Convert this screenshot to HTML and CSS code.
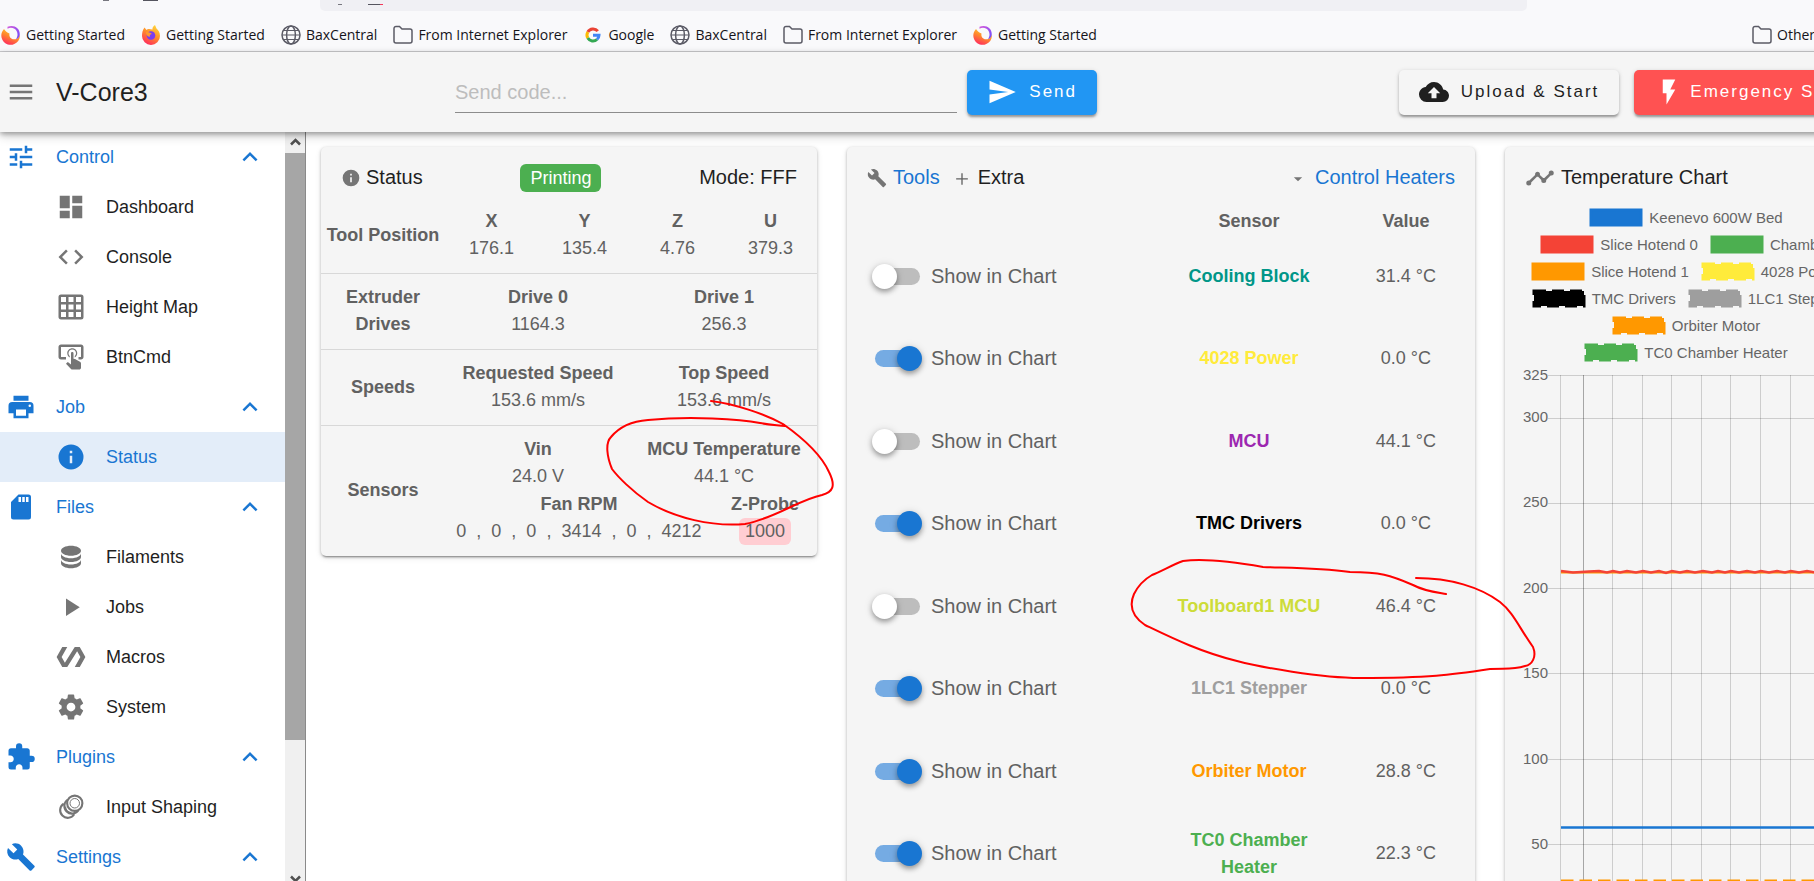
FILE: index.html
```html
<!DOCTYPE html>
<html lang="en">
<head>
<meta charset="utf-8">
<title>V-Core3</title>
<link rel="stylesheet" href="styles.css">
</head>
<body>
<svg class="sprite" aria-hidden="true">
  <defs>
    <linearGradient id="flame" x1="0.8" y1="0" x2="0.3" y2="1"><stop offset="0" stop-color="#ffde3a"/><stop offset="0.5" stop-color="#ff8a2c"/><stop offset="1" stop-color="#ff2a5f"/></linearGradient>
    <linearGradient id="swirl" x1="0" y1="0" x2="1" y2="1"><stop offset="0" stop-color="#d65ad8"/><stop offset="1" stop-color="#6a4bff"/></linearGradient>
  </defs>
  <symbol id="menu" viewBox="0 0 24 24"><path d="M3,6H21V8H3V6M3,11H21V13H3V11M3,16H21V18H3V16Z"/></symbol>
  <symbol id="tune" viewBox="0 0 24 24"><path d="M3,17V19H9V17H3M3,5V7H13V5H3M13,21V19H21V17H13V15H11V21H13M7,9V11H3V13H7V15H9V9H7M21,13V11H11V13H21M15,9H17V7H21V5H17V3H15V9Z"/></symbol>
  <symbol id="dashboard" viewBox="0 0 24 24"><path d="M13,3V9H21V3M13,21H21V11H13M3,21H11V15H3M3,13H11V3H3V13Z"/></symbol>
  <symbol id="code" viewBox="0 0 24 24"><path d="M14.6,16.6L19.2,12L14.6,7.4L16,6L22,12L16,18L14.6,16.6M9.4,16.6L4.8,12L9.4,7.4L8,6L2,12L8,18L9.4,16.6Z"/></symbol>
  <symbol id="grid" viewBox="0 0 24 24"><path d="M10,4V8H14V4H10M16,4V8H20V4H16M16,10V14H20V10H16M16,16V20H20V16H16M14,20V16H10V20H14M8,20V16H4V20H8M8,14V10H4V14H8M8,8V4H4V8H8M10,14H14V10H10V14M4,2H20A2,2 0 0,1 22,4V20A2,2 0 0,1 20,22H4C2.92,22 2,21.1 2,20V4A2,2 0 0,1 4,2Z"/></symbol>
  <symbol id="tap" viewBox="0 0 24 24"><path d="M13 5C15.21 5 17 6.79 17 9C17 10.5 16.2 11.77 15 12.46V11.24C15.61 10.69 16 9.89 16 9C16 7.34 14.66 6 13 6S10 7.34 10 9C10 9.89 10.39 10.69 11 11.24V12.46C9.8 11.77 9 10.5 9 9C9 6.79 10.79 5 13 5M20 20.5C19.97 21.32 19.32 21.97 18.5 22H13C12.62 22 12.26 21.85 12 21.57L8 17.37L8.74 16.6C8.93 16.39 9.2 16.28 9.5 16.28H9.7L12 18V9C12 8.45 12.45 8 13 8S14 8.45 14 9V13.47L15.21 13.6L19.15 15.79C19.68 16.03 20 16.56 20 17.14V20.5M20 2H4C2.9 2 2 2.9 2 4V12C2 13.11 2.9 14 4 14H8V12L4 12L4 4H20L20 12H18V14H20V13.97L20.04 14C21.13 14 22 13.09 22 12V4C22 2.9 21.11 2 20 2Z"/></symbol>
  <symbol id="printer" viewBox="0 0 24 24"><path d="M18,3H6V7H18M19,12A1,1 0 0,1 18,11A1,1 0 0,1 19,10A1,1 0 0,1 20,11A1,1 0 0,1 19,12M16,19H8V14H16M19,8H5A3,3 0 0,0 2,11V17H6V21H18V17H22V11A3,3 0 0,0 19,8Z"/></symbol>
  <symbol id="info" viewBox="0 0 24 24"><path d="M13,9H11V7H13M13,17H11V11H13M12,2A10,10 0 0,0 2,12A10,10 0 0,0 12,22A10,10 0 0,0 22,12A10,10 0 0,0 12,2Z"/></symbol>
  <symbol id="sd" viewBox="0 0 24 24"><path d="M18,8H16V4H18M15,8H13V4H15M12,8H10V4H12M18,2H10L4,8V20A2,2 0 0,0 6,22H18A2,2 0 0,0 20,20V4A2,2 0 0,0 18,2Z"/></symbol>
  <symbol id="database" viewBox="0 0 24 24"><path d="M12,3C7.58,3 4,4.79 4,7C4,9.21 7.58,11 12,11C16.42,11 20,9.21 20,7C20,4.79 16.42,3 12,3M4,9V12C4,14.21 7.58,16 12,16C16.42,16 20,14.21 20,12V9C20,11.21 16.42,13 12,13C7.58,13 4,11.21 4,9M4,14V17C4,19.21 7.58,21 12,21C16.42,21 20,19.21 20,17V14C20,16.21 16.42,18 12,18C7.58,18 4,16.21 4,14Z"/></symbol>
  <symbol id="play" viewBox="0 0 24 24"><path d="M8,5.14V19.14L19,12.14L8,5.14Z"/></symbol>
  <symbol id="polymer" viewBox="0 0 24 24"><path d="M19,4H15L7.11,16.63L4.5,12L9,4H5L0.5,12L5,20H9L16.89,7.37L19.5,12L15,20H19L23.5,12L19,4Z"/></symbol>
  <symbol id="cog" viewBox="0 0 24 24"><path d="M12,15.5A3.5,3.5 0 0,1 8.5,12A3.5,3.5 0 0,1 12,8.5A3.5,3.5 0 0,1 15.5,12A3.5,3.5 0 0,1 12,15.5M19.43,12.97C19.47,12.65 19.5,12.33 19.5,12C19.5,11.67 19.47,11.34 19.43,11L21.54,9.37C21.73,9.22 21.78,8.95 21.66,8.73L19.66,5.27C19.54,5.05 19.27,4.96 19.05,5.05L16.56,6.05C16.04,5.66 15.5,5.32 14.87,5.07L14.5,2.42C14.46,2.18 14.25,2 14,2H10C9.75,2 9.54,2.18 9.5,2.42L9.13,5.07C8.5,5.32 7.96,5.66 7.44,6.05L4.95,5.05C4.73,4.96 4.46,5.05 4.34,5.27L2.34,8.73C2.21,8.95 2.27,9.22 2.46,9.37L4.57,11C4.53,11.34 4.5,11.67 4.5,12C4.5,12.33 4.53,12.65 4.57,12.97L2.46,14.63C2.27,14.78 2.21,15.05 2.34,15.27L4.34,18.73C4.46,18.95 4.73,19.03 4.95,18.95L7.44,17.94C7.96,18.34 8.5,18.68 9.13,18.93L9.5,21.58C9.54,21.82 9.75,22 10,22H14C14.25,22 14.46,21.82 14.5,21.58L14.87,18.93C15.5,18.67 16.04,18.34 16.56,17.94L19.05,18.95C19.27,19.03 19.54,18.95 19.66,18.73L21.66,15.27C21.78,15.05 21.73,14.78 21.54,14.63L19.43,12.97Z"/></symbol>
  <symbol id="puzzle" viewBox="0 0 24 24"><path d="M20.5,11H19V7C19,5.89 18.1,5 17,5H13V3.5A2.5,2.5 0 0,0 10.5,1A2.5,2.5 0 0,0 8,3.5V5H4A2,2 0 0,0 2,7V10.8H3.5C5,10.8 6.2,12 6.2,13.5C6.2,15 5,16.2 3.5,16.2H2V20A2,2 0 0,0 4,22H7.8V20.5C7.8,19 9,17.8 10.5,17.8C12,17.8 13.2,19 13.2,20.5V22H17A2,2 0 0,0 19,20V16H20.5A2.5,2.5 0 0,0 23,13.5A2.5,2.5 0 0,0 20.5,11Z"/></symbol>
  <symbol id="rings" viewBox="0 0 24 24"><g fill="none" stroke="currentColor" stroke-width="1.7"><circle cx="15" cy="9" r="6.1"/><path d="M9.300 6.200A6.100 6.100 0 1 0 17.800 14.700"/><path d="M6.200 9.400A6.100 6.100 0 1 0 14.600 17.800"/><circle cx="15" cy="9" r="3.800" stroke-width="0.8"/><path d="M7.500 11.800A5 5 0 0 0 12.200 16.500" stroke-width="1.2"/></g></symbol>
  <symbol id="wrench" viewBox="0 0 24 24"><path d="M22.7,19L13.6,9.9C14.5,7.6 14,4.9 12.1,3C10.1,1 7.1,0.6 4.7,1.7L9,6L6,9L1.6,4.7C0.4,7.1 0.9,10.1 2.9,12.1C4.8,14 7.5,14.5 9.8,13.6L18.9,22.7C19.3,23.1 19.9,23.1 20.3,22.7L22.6,20.4C23.1,20 23.1,19.3 22.7,19Z"/></symbol>
  <symbol id="up" viewBox="0 0 24 24"><path d="M7.41,15.41L12,10.83L16.59,15.41L18,14L12,8L6,14L7.41,15.41Z"/></symbol>
  <symbol id="send" viewBox="0 0 24 24"><path d="M2,21L23,12L2,3V10L17,12L2,14V21Z"/></symbol>
  <symbol id="upload" viewBox="0 0 24 24"><path d="M14,13V17H10V13H7L12,8L17,13M19.35,10.03C18.67,6.59 15.64,4 12,4C9.11,4 6.6,5.64 5.35,8.03C2.34,8.36 0,10.9 0,14A6,6 0 0,0 6,20H19A5,5 0 0,0 24,15C24,12.36 21.95,10.22 19.35,10.03Z"/></symbol>
  <symbol id="flash" viewBox="0 0 24 24"><path d="M7,2V13H10V22L17,10H13L17,2H7Z"/></symbol>
  <symbol id="plus" viewBox="0 0 24 24"><path d="M11.200 6.200H12.800V12.200H19V13.800H12.800V20H11.200V13.800H5V12.200H11.200Z"/></symbol>
  <symbol id="caret" viewBox="0 0 24 24"><path d="M7,11L12,16L17,11H7Z"/></symbol>
  <symbol id="trend" viewBox="0 0 24 24"><path d="M3,14L3.5,14.07L8.07,9.5C7.89,8.85 8.06,8.11 8.59,7.59C9.37,6.8 10.63,6.8 11.41,7.59C11.94,8.11 12.11,8.85 11.93,9.5L14.5,12.07L15,12C15.18,12 15.35,12 15.5,12.07L19.07,8.5C19,8.35 19,8.18 19,8A2,2 0 0,1 21,6A2,2 0 0,1 23,8A2,2 0 0,1 21,10C20.82,10 20.65,10 20.5,9.93L16.93,13.5C17,13.65 17,13.82 17,14A2,2 0 0,1 15,16A2,2 0 0,1 13,14L13.07,13.5L10.5,10.93C10.18,11 9.82,11 9.5,10.93L4.93,15.5L5,16A2,2 0 0,1 3,18A2,2 0 0,1 1,16A2,2 0 0,1 3,14Z"/></symbol>
  <symbol id="folder" viewBox="0 0 20 20"><path d="M3 1.5H6.5L9 4H17A2 2 0 0 1 19 6V16A2 2 0 0 1 17 18H3A2 2 0 0 1 1 16V3.5A2 2 0 0 1 3 1.5Z" fill="none" stroke="#5b5b66" stroke-width="1.5"/></symbol>
  <symbol id="globe" viewBox="0 0 20 20"><g fill="none" stroke="#5b5b66" stroke-width="1.5"><circle cx="10" cy="10" r="9"/><ellipse cx="10" cy="10" rx="4.4" ry="9"/><path d="M1 10H19M2.5 5.5H17.5M2.5 14.5H17.5" stroke-width="1.2"/></g></symbol>
  <symbol id="started" viewBox="0 0 20 20"><path d="M3 4A9.300 9.300 0 1 0 18.800 9C18 13 15.500 14.500 13 14.300C9 14 8 11 8.500 8.500C6 7.500 4.500 6.500 3 4Z" fill="url(#flame)"/><path d="M6.500 1.800C13-1 19.800 3.500 18.600 10.500C18 12.500 16.500 14 15 14C17.500 10.500 16.800 6 13.500 3.800C11 2.400 8.500 2.600 6.500 3.800Z" fill="url(#swirl)"/></symbol>
  <symbol id="firefox" viewBox="0 0 20 20"><path d="M1 11A9 9 0 0 0 19 11C19 7 17 5 15.500 3.500L14 0C11 2 11.500 4 11.500 4.500C8 3.500 6.500 4 5.500 5L3.500 2.500C1.500 5 1 8 1 11Z" fill="url(#flame)"/><circle cx="10" cy="10.500" r="4.300" fill="#7a3cf0"/><path d="M5 7C8 6.500 10 8 11 9C9 9 8.500 10.500 9 11.500C7 12.500 5 10 5 7Z" fill="#ff9a2e"/></symbol>
  <symbol id="google" viewBox="0 0 20 20"><g fill="none" stroke-width="3"><path d="M14.800 6.200A6 6 0 0 0 4.800 7" stroke="#ea4335"/><path d="M4.800 7A6 6 0 0 0 4.800 13" stroke="#fbbc05"/><path d="M4.800 13A6 6 0 0 0 14 14.500" stroke="#34a853"/><path d="M10 10.200H16A6 6 0 0 1 14 14.500" stroke="#4285f4"/></g></symbol>
</svg>

<div class="browser">
  <div class="toolbar">
    <svg class="toolbar-marks" width="200" height="2"><rect x="103" width="6" height="1" fill="#77777f"/><rect x="143" width="15" height="1" fill="#55555f"/></svg>
    <div class="address"><svg width="200" height="2"><rect x="18" width="4" height="1" fill="#77777f"/><rect x="48" width="12" height="1" fill="#55555f"/><rect x="60" width="3" height="1" fill="#f2385a"/></svg></div>
  </div>
  <nav class="bookmarks" aria-label="Bookmarks">
    <a href="#"><svg><use href="#started"/></svg>Getting Started</a>
    <a href="#"><svg><use href="#firefox"/></svg>Getting Started</a>
    <a href="#"><svg><use href="#globe"/></svg>BaxCentral</a>
    <a href="#"><svg><use href="#folder"/></svg>From Internet Explorer</a>
    <a href="#"><svg><use href="#google"/></svg>Google</a>
    <a href="#"><svg><use href="#globe"/></svg>BaxCentral</a>
    <a href="#"><svg><use href="#folder"/></svg>From Internet Explorer</a>
    <a href="#"><svg><use href="#started"/></svg>Getting Started</a>
    <a href="#" class="other"><svg><use href="#folder"/></svg>Other Bookmarks</a>
  </nav>
</div>

<header class="appbar">
  <button class="menu-button" aria-label="Menu"><svg class="icon"><use href="#menu"/></svg></button>
  <h1>V-Core3</h1>
  <form class="send-form">
    <input type="text" placeholder="Send code..." aria-label="Send code">
    <button type="button" class="btn send"><svg class="icon"><use href="#send"/></svg>Send</button>
  </form>
  <div class="actions">
    <button class="btn"><svg class="icon"><use href="#upload"/></svg>Upload &amp; Start</button>
    <button class="btn stop"><svg class="icon"><use href="#flash"/></svg>Emergency Stop</button>
  </div>
</header>

<div class="shell">
  <aside class="sidebar">
    <nav class="menu" aria-label="Main">
      <button class="group"><svg class="icon"><use href="#tune"/></svg>Control<svg class="icon chevron"><use href="#up"/></svg></button>
      <a href="#"><svg class="icon"><use href="#dashboard"/></svg>Dashboard</a>
      <a href="#"><svg class="icon"><use href="#code"/></svg>Console</a>
      <a href="#"><svg class="icon"><use href="#grid"/></svg>Height Map</a>
      <a href="#"><svg class="icon"><use href="#tap"/></svg>BtnCmd</a>
      <button class="group"><svg class="icon"><use href="#printer"/></svg>Job<svg class="icon chevron"><use href="#up"/></svg></button>
      <a href="#" class="active"><svg class="icon"><use href="#info"/></svg>Status</a>
      <button class="group"><svg class="icon"><use href="#sd"/></svg>Files<svg class="icon chevron"><use href="#up"/></svg></button>
      <a href="#"><svg class="icon"><use href="#database"/></svg>Filaments</a>
      <a href="#"><svg class="icon"><use href="#play"/></svg>Jobs</a>
      <a href="#"><svg class="icon"><use href="#polymer"/></svg>Macros</a>
      <a href="#"><svg class="icon"><use href="#cog"/></svg>System</a>
      <button class="group"><svg class="icon"><use href="#puzzle"/></svg>Plugins<svg class="icon chevron"><use href="#up"/></svg></button>
      <a href="#"><svg class="icon"><use href="#rings"/></svg>Input Shaping</a>
      <button class="group"><svg class="icon"><use href="#wrench"/></svg>Settings<svg class="icon chevron"><use href="#up"/></svg></button>
    </nav>
    <div class="scrollbar" aria-hidden="true">
      <svg class="arrow" viewBox="0 0 20 21"><path d="M6 12.500L10.500 8L15 12.500" fill="none" stroke="#505050" stroke-width="2.500"/></svg>
      <div class="thumb"></div>
      <div class="track"></div>
      <svg class="arrow" viewBox="0 0 20 21"><path d="M6 16.500L10.500 21L15 16.500" fill="none" stroke="#505050" stroke-width="2.500"/></svg>
    </div>
  </aside>

  <main class="cards">
    <section class="card">
      <header class="card-head">
        <div class="title"><svg class="icon small"><use href="#info"/></svg><h2>Status</h2></div>
        <span class="badge">Printing</span>
        <span class="mode">Mode: FFF</span>
      </header>
      <div class="row">
        <strong class="label">Tool Position</strong>
        <div class="values">
          <div class="cell"><strong>X</strong><span>176.1</span></div>
          <div class="cell"><strong>Y</strong><span>135.4</span></div>
          <div class="cell"><strong>Z</strong><span>4.76</span></div>
          <div class="cell"><strong>U</strong><span>379.3</span></div>
        </div>
      </div>
      <div class="row">
        <strong class="label">Extruder Drives</strong>
        <div class="values">
          <div class="cell"><strong>Drive 0</strong><span>1164.3</span></div>
          <div class="cell"><strong>Drive 1</strong><span>256.3</span></div>
        </div>
      </div>
      <div class="row">
        <strong class="label">Speeds</strong>
        <div class="values">
          <div class="cell"><strong>Requested Speed</strong><span>153.6 mm/s</span></div>
          <div class="cell"><strong>Top Speed</strong><span>153.6 mm/s</span></div>
        </div>
      </div>
      <div class="row">
        <strong class="label">Sensors</strong>
        <div class="stack">
          <div class="values">
            <div class="cell"><strong>Vin</strong><span>24.0 V</span></div>
            <div class="cell"><strong>MCU Temperature</strong><span>44.1 °C</span></div>
          </div>
          <div class="values">
            <div class="cell wide"><strong>Fan RPM</strong><span class="fans"><span>0</span><span>,</span><span>0</span><span>,</span><span>0</span><span>,</span><span>3414</span><span>,</span><span>0</span><span>,</span><span>4212</span></span></div>
            <div class="cell narrow"><strong>Z-Probe</strong><span class="probe">1000</span></div>
          </div>
        </div>
      </div>
    </section>

    <section class="card tall">
      <header class="card-head">
        <div class="title"><svg class="icon small"><use href="#wrench"/></svg><a href="#">Tools</a></div>
        <div class="title extra"><svg class="icon small"><use href="#plus"/></svg><h2>Extra</h2></div>
        <a href="#" class="heaters"><svg class="icon small"><use href="#caret"/></svg>Control Heaters</a>
      </header>
      <table class="sensors">
        <thead><tr><td></td><th>Sensor</th><th>Value</th></tr></thead>
        <tbody>
          <tr><td><label><input type="checkbox" class="switch">Show in Chart</label></td><th class="teal">Cooling Block</th><td>31.4 °C</td></tr>
          <tr><td><label><input type="checkbox" class="switch" checked>Show in Chart</label></td><th class="yellow">4028 Power</th><td>0.0 °C</td></tr>
          <tr><td><label><input type="checkbox" class="switch">Show in Chart</label></td><th class="purple">MCU</th><td>44.1 °C</td></tr>
          <tr><td><label><input type="checkbox" class="switch" checked>Show in Chart</label></td><th class="black">TMC Drivers</th><td>0.0 °C</td></tr>
          <tr><td><label><input type="checkbox" class="switch">Show in Chart</label></td><th class="lime">Toolboard1 MCU</th><td>46.4 °C</td></tr>
          <tr><td><label><input type="checkbox" class="switch" checked>Show in Chart</label></td><th class="grey">1LC1 Stepper</th><td>0.0 °C</td></tr>
          <tr><td><label><input type="checkbox" class="switch" checked>Show in Chart</label></td><th class="orange">Orbiter Motor</th><td>28.8 °C</td></tr>
          <tr><td><label><input type="checkbox" class="switch" checked>Show in Chart</label></td><th class="green">TC0 Chamber Heater</th><td>22.3 °C</td></tr>
        </tbody>
      </table>
    </section>

    <section class="card tall">
      <header class="card-head">
        <div class="title"><svg class="icon"><use href="#trend"/></svg><h2>Temperature Chart</h2></div>
      </header>
      <ul class="legend">
        <li class="blue"><svg><rect x="2" y="2" width="50" height="15"/></svg>Keenevo 600W Bed</li>
        <li class="red"><svg><rect x="2" y="2" width="50" height="15"/></svg>Slice Hotend 0</li>
        <li class="green"><svg><rect x="2" y="2" width="50" height="15"/></svg>Chamber</li>
        <li class="orange"><svg><rect x="2" y="2" width="50" height="15"/></svg>Slice Hotend 1</li>
        <li class="yellow dashed"><svg><rect x="2" y="2" width="50" height="15"/></svg>4028 Power</li>
        <li class="black dashed"><svg><rect x="2" y="2" width="50" height="15"/></svg>TMC Drivers</li>
        <li class="grey dashed"><svg><rect x="2" y="2" width="50" height="15"/></svg>1LC1 Stepper</li>
        <li class="orange dashed"><svg><rect x="2" y="2" width="50" height="15"/></svg>Orbiter Motor</li>
        <li class="green dashed"><svg><rect x="2" y="2" width="50" height="15"/></svg>TC0 Chamber Heater</li>
      </ul>
      <svg class="chart" role="img" aria-label="Temperature history">
        <g class="gridlines">
          <path d="M43 10.500H360M43 53.500H360M43 138.500H360M43 223.500H360M43 308.500H360M43 394.500H360M43 479.500H360"/>
          <path d="M55.500 10V600M107.500 10V600M137.500 10V600M166.500 10V600M196.500 10V600M225.500 10V600M255.500 10V600M285.500 10V600M314.500 10V600M344.500 10V600"/>
          <path class="major" d="M78.500 10V600"/>
        </g>
        <g class="ticks">
          <text x="43" y="15">325</text><text x="43" y="57">300</text><text x="43" y="142">250</text><text x="43" y="228">200</text><text x="43" y="313">150</text><text x="43" y="399">100</text><text x="43" y="484">50</text>
        </g>
        <path d="M56 207.500H360" stroke="#ff9800" stroke-width="2" fill="none"/>
        <path d="M56 206L68 207.500L84 206.500L94 206L102 207.500L108 206L115 207.500L122 206L131 207.500L138 206L146 207.500L154 206L161 208L167 206L175 207.500L182 206L190 207.500L198 206L207 207.500L213 206L220 207.500L226 206L234 207.500L242 206L250 207.500L256 206L264 207.500L272 206L280 207.500L286 206L294 207.500L302 206L310 207.500L330 206.500L360 207" stroke="#f44336" stroke-width="2.500" fill="none"/>
        <path d="M56 462.500H360" stroke="#1976d2" stroke-width="2.500" fill="none"/>
        <path d="M56 516H360" stroke="#ff9800" stroke-width="3" stroke-dasharray="12.500 6" fill="none"/>
      </svg>
    </section>
  </main>
</div>

<svg class="annotations" aria-hidden="true">
  <path d="M711 401C735 404 765 414 783 424C800 436 820 452 829 472C836 486 833 492 822 495C798 500 776 518 745 524C712 527 675 518 648 502C632 491 618 477 612 469C607 457 605 443 611 437C620 426 635 421 648 420C690 416 740 419 760 423C770 425 778 425 785 426"/>
  <path d="M1416 578C1450 578 1480 587 1500 602C1513 612 1520 629 1533 647C1537 657 1532 665 1525 666C1512 670 1505 668 1490 669C1450 675 1430 678 1360 678C1320 678 1260 667 1237 661C1200 652 1170 637 1145 625C1129 614 1130 603 1134 594C1139 584 1145 579 1152 575C1162 571 1172 565 1183 561C1205 558 1235 562 1263 567C1290 568 1320 568 1350 572C1380 572 1390 575 1413 585C1424 591 1434 592 1446 594"/>
</svg>
</body>
</html>
```
FILE: styles.css
```css
* { box-sizing: border-box; }

body {
  position: relative;
  display: flex;
  flex-direction: column;
  height: 100vh;
  margin: 0;
  overflow: hidden;
  background: #fff;
  color: #1f1f1f;
  font-family: "Liberation Sans", Arial, sans-serif;
  font-size: 18px;
}

h1, h2 { margin: 0; font-weight: 400; }
a { color: inherit; text-decoration: none; }
button { font: inherit; color: inherit; border: 0; background: none; cursor: pointer; }

.sprite { position: absolute; width: 0; height: 0; }
.icon { flex: none; width: 30px; height: 30px; fill: currentColor; color: #757575; }
.icon.small { width: 20px; height: 20px; }

/* Browser chrome */
.browser { flex: none; background: #f9f9fb; border-bottom: 1px solid #cccccf; }
.toolbar { position: relative; height: 11px; padding: 0 287px 0 320px; }
.toolbar-marks { position: absolute; left: 0; top: 0; }
.address { height: 11px; background: #f0f0f4; border-radius: 0 0 5px 5px; line-height: 0; }
.bookmarks {
  display: flex;
  align-items: center;
  gap: 16px;
  height: 40px;
  padding: 8px 0 0 1px;
  color: #15141a;
  font-family: "Open Sans", "Noto Sans", sans-serif;
  font-size: 14px;
  white-space: nowrap;
}
.bookmarks a { display: flex; align-items: center; gap: 5px; line-height: 20px; }
.bookmarks svg { flex: none; width: 20px; height: 20px; }
.bookmarks .other { width: 62px; margin-left: auto; }

/* Application bar */
.appbar {
  position: relative;
  z-index: 1;
  display: flex;
  flex: none;
  align-items: center;
  width: calc(100% + 70px);
  height: 80px;
  padding: 0 20px 0 3px;
  background: #f5f5f5;
  box-shadow: 0 2px 5px rgba(0, 0, 0, .3), 0 4px 10px rgba(0, 0, 0, .18);
}
.menu-button { display: flex; width: 36px; padding: 3px; }
.appbar h1 { width: 398px; padding-left: 17px; font-size: 25px; }
.send-form { display: flex; flex: 0 1 660px; gap: 10px; }
.send-form input {
  flex: 1;
  min-width: 0;
  height: 43px;
  margin-left: 18px;
  padding: 3px 0 0;
  border: 0;
  border-bottom: 1px solid #8c8c8c;
  background: none;
  font: inherit;
  font-size: 20px;
}
.send-form input::placeholder { color: #bdbdbd; }
.btn {
  display: flex;
  align-items: center;
  gap: 12px;
  height: 45px;
  padding: 0 20px;
  border-radius: 5px;
  background: #f5f5f5;
  box-shadow: 0 3px 2px -1px rgba(0, 0, 0, .2), 0 2px 3px rgba(0, 0, 0, .16), 0 1px 5px rgba(0, 0, 0, .14);
  font-size: 17px;
  letter-spacing: 2px;
  white-space: nowrap;
}
.btn .icon { color: inherit; }
.send { background: #2196f3; color: #fff; }
.stop { gap: 6px; background: #ff5252; color: #fff; }
.actions { display: flex; gap: 15px; margin-left: auto; }

/* Navigation */
.shell { display: flex; flex: 1; min-height: 0; overflow: hidden; }
.sidebar { display: flex; flex: none; width: 306px; border-right: 1px solid #8a8a8a; }
.menu { flex: 1; overflow: hidden; }
.menu .group, .menu a {
  display: flex;
  align-items: center;
  width: 100%;
  height: 50px;
  text-align: left;
}
.menu .group { gap: 20px; padding: 0 20px 0 6px; color: #1976d2; }
.menu a { gap: 20px; padding: 0 0 0 56px; }
.menu .group .icon, .menu .active .icon { color: #1976d2; }
.menu .chevron { margin-left: auto; }
.menu a.active { background: #e3edf9; color: #1976d2; }

.scrollbar { display: flex; flex-direction: column; width: 20px; background: #f0f0f0; }
.scrollbar .arrow { flex: none; width: 20px; height: 21px; }
.scrollbar .thumb { flex: 587; background: #a6a6a6; }
.scrollbar .track { flex: 120; }

/* Cards */
.cards {
  display: grid;
  flex: none;
  grid-template-columns: 124fr 157fr 91fr;
  align-items: start;
  gap: 30px;
  width: calc(100% - 251px);
  padding: 15px 0 0 15px;
}
.card {
  min-width: 0;
  border-radius: 5px;
  background: #f5f5f5;
  color: #616161;
  box-shadow: 0 3px 2px -2px rgba(0, 0, 0, .3), 0 1px 3px rgba(0, 0, 0, .25), 0 2px 6px rgba(0, 0, 0, .1);
}
.tall { min-height: 780px; }
.card-head {
  display: flex;
  align-items: center;
  justify-content: space-between;
  height: 50px;
  padding: 11px 20px 0;
  color: #1f1f1f;
  font-size: 20px;
}
.card-head h2 { font-size: 20px; }
.card-head a { color: #1976d2; }
.title { display: flex; align-items: center; gap: 6px; }
.title .small + h2 { margin-left: -1px; }
.extra { margin: 0 auto 0 12px; }
.extra .small { color: #616161; }
.extra .small + h2 { margin-left: 0; }
.heaters { display: flex; align-items: center; gap: 7px; }
.badge { padding: 0 10px; border-radius: 6px; background: #4caf50; color: #fff; font-size: 18px; line-height: 28px; }

.row { display: flex; align-items: center; padding: 11px 0; line-height: 27px; text-align: center; }
.row + .row { border-top: 1px solid #d8d8d8; padding-top: 10px; }
.label { flex: none; width: 25%; padding: 0 4px; }
.stack { display: flex; flex: 1; flex-direction: column; gap: 1px; }
.values { display: flex; flex: 1; }
.cell { display: flex; flex: 1; flex-direction: column; align-items: center; }
.cell.wide { flex: 18; }
.cell.narrow { flex: 7; }
.fans { display: flex; gap: 10px; }
.probe { padding: 0 6px; border-radius: 6px; background: #ffcdd2; }

/* Sensor table */
.sensors { width: 100%; table-layout: fixed; border-collapse: collapse; line-height: 27px; text-align: center; }
.sensors th, .sensors td { padding: 0 15px; }
.sensors thead td { width: 50%; }
.sensors thead th { width: 28%; padding: 11px 15px 0; }
.sensors thead th:last-child { width: 22%; }
.sensors tbody tr { height: 82px; }
.sensors tbody tr:nth-child(even) { height: 83px; }
.sensors label { display: flex; align-items: center; gap: 9px; padding-left: 10px; font-size: 20px; }
.switch {
  position: relative;
  width: 50px;
  height: 25px;
  margin: 0;
  appearance: none;
}
.switch::before {
  content: "";
  position: absolute;
  inset: 4px 2px 4px 3px;
  border-radius: 9px;
  background: #bdbdbd;
}
.switch::after {
  content: "";
  position: absolute;
  left: 0;
  top: 0;
  width: 25px;
  height: 25px;
  border-radius: 50%;
  background: #fff;
  box-shadow: 0 3px 5px rgba(0, 0, 0, .3), 0 1px 8px rgba(0, 0, 0, .15);
}
.switch:checked::before { background: #75abe3; }
.switch:checked::after { left: 25px; background: #1976d2; }

.teal { color: #009688; }
.yellow { color: #ffeb3b; }
.purple { color: #9c27b0; }
.black { color: #000; }
.lime { color: #cddc39; }
.grey { color: #9e9e9e; }
.orange { color: #ff9800; }
.green { color: #4caf50; }
.blue { color: #1976d2; }
.red { color: #f44336; }

/* Chart */
.legend {
  display: flex;
  flex-wrap: wrap;
  justify-content: center;
  gap: 8px 12px;
  margin: 0;
  padding: 11px 17px 3px 15px;
  list-style: none;
  font-size: 15px;
  line-height: 19px;
}
.legend li { display: flex; gap: 6px; -webkit-text-fill-color: #666; }
.legend svg { width: 54px; height: 19px; fill: currentColor; stroke: currentColor; stroke-width: 3; }
.legend .dashed svg { stroke-dasharray: 12 6; }
.chart { display: block; width: 100%; height: 560px; }
.gridlines { fill: none; stroke: rgba(0, 0, 0, .16); stroke-width: 1; }
.gridlines .major { stroke: rgba(0, 0, 0, .32); }
.ticks { fill: #666; font-size: 15px; text-anchor: end; }

/* Freehand marks over the page */
.annotations { position: absolute; inset: 0; z-index: 2; width: 100%; height: 100%; pointer-events: none; }
.annotations path { fill: none; stroke: #f00; stroke-width: 2; stroke-linecap: round; }
```
